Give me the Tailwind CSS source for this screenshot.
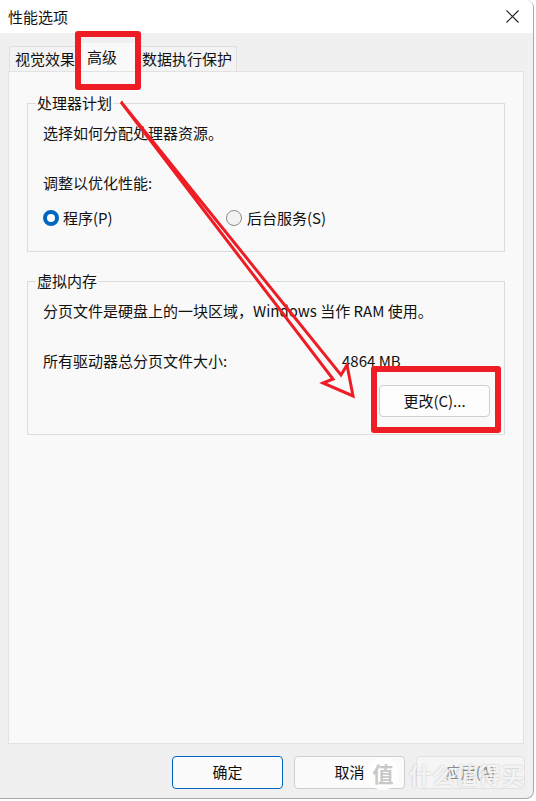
<!DOCTYPE html>
<html lang="zh">
<head>
    <meta charset="UTF-8">
    <title>性能选项</title>
    <script src="https://cdn.jsdelivr.net/npm/@tailwindcss/browser@4"></script>
</head>
<body class="w-[536px] h-[801px] overflow-hidden bg-white text-[#111] text-[15px] font-['Noto_Sans_CJK_SC','Noto_Sans',sans-serif]">

    <div class="relative w-[536px] h-[801px]">

        <!-- window -->
        <div class="w-[534px] h-[799px] flex flex-col bg-[#f0f0f0] border-r border-b border-[#a8a8a8] rounded-tr-[8px] rounded-br-[8px] overflow-hidden">

            <!-- title bar -->
            <div class="h-[33px] shrink-0 bg-white flex items-center justify-between pl-2 pr-[14px]">
                <span class="leading-none">性能选项</span>
                <svg class="w-[13px] h-[13px]" viewBox="0 0 13 13" fill="none" stroke="#222" stroke-width="1.1"><path d="M0.5 0.5L12.5 12.5M12.5 0.5L0.5 12.5"/></svg>
            </div>

            <!-- tabs -->
            <div class="flex h-[38px] shrink-0 pl-[9px] items-end">
                <div class="h-[25px] px-[5px] border border-b-0 border-[#e0e0e0] bg-[#f3f3f3] rounded-t-[3px] flex items-center">视觉效果</div>
                <div class="h-[28px] w-[61px] -ml-[6px] shrink-0 bg-[#f9f9f9] flex items-center pl-[12px]">高级</div>
                <div class="h-[25px] pl-[6px] pr-[4px] border border-b-0 border-l-0 border-[#e0e0e0] bg-[#f3f3f3] rounded-t-[3px] flex items-center">数据执行保护</div>
            </div>

            <!-- page -->
            <div class="ml-[8px] w-[516px] h-[673px] shrink-0 bg-[#f9f9f9] border border-[#e2e2e2] pt-[23px] px-[18px]">
                <fieldset class="border border-[#dcdcdc] h-[157px] pl-[15px] pr-4">
                    <legend class="px-[1px] -ml-[7px] leading-[16px]">处理器计划</legend>
                    <p class="mt-[12px] leading-[20px]">选择如何分配处理器资源。</p>
                    <p class="mt-[30px] leading-[20px]">调整以优化性能:</p>
                    <div class="flex items-center mt-[15px] h-[20px]">
                        <span class="w-[16px] h-[16px] rounded-full border-[4.5px] border-[#0067c0] bg-white"></span>
                        <span class="ml-[4px] w-[163px]">程序(P)</span>
                        <span class="w-[16px] h-[16px] rounded-full border border-[#8a8a8a] bg-[#f3f3f3]"></span>
                        <span class="ml-[5px]">后台服务(S)</span>
                    </div>
                </fieldset>

                <fieldset class="border border-[#dcdcdc] h-[162px] mt-[21px] pl-[15px] pr-[14px]">
                    <legend class="px-[1px] -ml-[7px] leading-[16px]">虚拟内存</legend>
                    <p class="mt-[12px] leading-[20px] whitespace-nowrap">分页文件是硬盘上的一块区域，Windows 当作 RAM 使用。</p>
                    <div class="flex mt-[30px] leading-[20px]">
                        <span class="w-[299px]">所有驱动器总分页文件大小:</span>
                        <span>4864 MB</span>
                    </div>
                    <div class="flex justify-end mt-[14px]">
                        <div class="w-[111px] h-[32px] bg-[#fdfdfd] border border-[#cfcfcf] rounded-[4px] flex items-center justify-center">更改(C)...</div>
                    </div>
                </fieldset>
            </div>

            <!-- footer buttons -->
            <div class="flex pl-[172px] gap-[11px] mt-[12px]">
                <div class="w-[111px] h-[33px] bg-[#fbfbfb] border border-[#0067c0] rounded-[4px] flex items-center justify-center">确定</div>
                <div class="w-[111px] h-[33px] bg-[#fbfbfb] border border-[#cfcfcf] rounded-[4px] flex items-center justify-center">取消</div>
                <div class="w-[109px] h-[33px] bg-[#f5f5f5] border border-[#e2e2e2] rounded-[4px] flex items-center justify-center text-[#8c8c8c]">应用(A)</div>
            </div>
        </div>

        <!-- red annotations -->
        <div class="absolute left-[75px] top-[31px] w-[66px] h-[59px] border-[6px] border-[#ee1c25] rounded-[3px]"></div>
        <div class="absolute left-[371px] top-[366px] w-[130px] h-[67px] border-[6px] border-[#ee1c25] rounded-[3px]"></div>
        <svg class="absolute left-0 top-0 w-[536px] h-[801px]" viewBox="0 0 536 801" fill="none" stroke="#ee1c25" stroke-width="3" stroke-linejoin="miter" stroke-linecap="round">
            <path d="M121 102L341 375L347 365L353 396L323 383L333 379Z"/>
        </svg>

        <!-- watermark -->
        <div class="absolute left-[367px] top-[758px] w-[32px] h-[32px] rounded-full bg-white/85 flex items-center justify-center text-[#c8c8c8] text-[21px] font-bold">值</div>
        <div class="absolute left-[409px] top-[758px] text-[23px] leading-[32px] text-white/80 font-bold whitespace-nowrap [text-shadow:0_0_2px_rgba(0,0,0,0.25)]">什么值得买</div>
    </div>

</body>
</html>
